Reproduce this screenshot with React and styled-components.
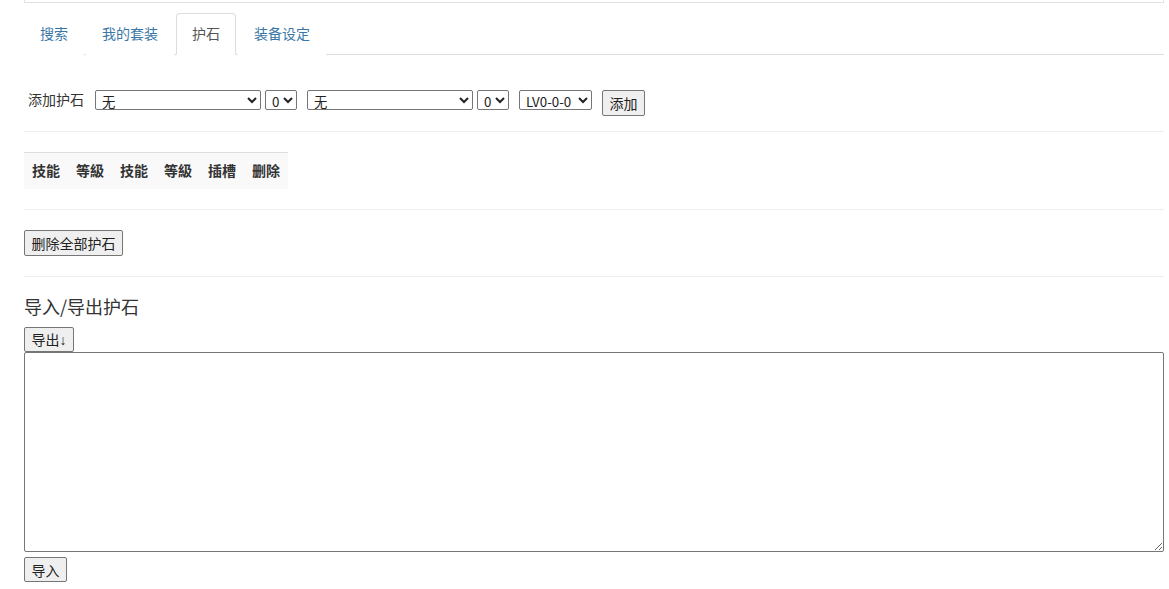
import React from 'react'
import styled, { createGlobalStyle } from 'styled-components'

const GlobalStyle = createGlobalStyle`
  body {
    margin: 0;
    background: #fff;
    font-family: "Noto Sans CJK SC", "Noto Sans", "Liberation Sans", sans-serif;
    font-size: 14px;
    color: #333;
  }
`

const Page = styled.div`
  width: 1140px;
  margin-left: 24px;
`

const TopStrip = styled.div`
  height: 2px;
  border: 1px solid #e2e2e2;
  border-top: none;
`

const Tabs = styled.ul`
  display: flex;
  list-style: none;
  margin: 10px 0 0;
  padding: 0;
  border-bottom: 1px solid #ddd;
`

const Tab = styled.li`
  margin-right: 2px;
  margin-bottom: -1px;
  a {
    display: block;
    padding: 9px 15px 11px;
    line-height: 20px;
    font-size: 14px;
    text-decoration: none;
    border: 1px solid transparent;
    border-radius: 4px 4px 0 0;
    color: ${p => (p.$active ? '#555' : '#3a77a8')};
    background: #fff;
    ${p => p.$active && 'border-color: #ddd; border-bottom-color: transparent;'}
  }
`

const AddRow = styled.div`
  display: flex;
  align-items: flex-start;
  padding-top: 35px;
`

const Label = styled.span`
  padding-left: 4px;
  margin-right: 11px;
  line-height: 19px;
  font-size: 14px;
`

const Select = styled.select`
  box-sizing: border-box;
  height: 20px;
  width: ${p => p.$w}px;
  margin-right: ${p => p.$gap}px;
  padding: 0 0 0 2px;
  font-family: "Noto Sans CJK SC", "Liberation Sans", sans-serif;
  font-size: 13.33px;
  color: #222;
  border: 1px solid #767676;
  border-radius: 2px;
  background: #fff;
`

const Button = styled.button`
  box-sizing: border-box;
  height: ${p => p.$h || 25}px;
  padding: 0 6.5px;
  font-family: "Noto Sans CJK SC", "Liberation Sans", sans-serif;
  font-size: 14px;
  line-height: 20px;
  color: #222;
  background: #efefef;
  border: 1px solid #767676;
  border-radius: 2px;
`

const Arrow = styled.span`
  font-family: "Liberation Sans", sans-serif;
`

const Rule = styled.hr`
  margin: ${p => p.$top}px 0 20px;
  border: 0;
  border-top: 1px solid #eee;
`

const Table = styled.table`
  border-collapse: collapse;
  border-top: 1px solid #ddd;
  background: #f9f9f9;
  th {
    padding: 7px 8px 9px;
    line-height: 20px;
    font-size: 14px;
    font-weight: bold;
    text-align: left;
    color: #333;
  }
`

const Heading = styled.h4`
  margin: 20px 0 10px;
  font-size: 18px;
  font-weight: 400;
  line-height: 18px;
  padding-bottom: 2px;
  color: #333;
`

const Area = styled.textarea`
  display: block;
  box-sizing: border-box;
  width: 1140px;
  height: 200px;
  margin: 0 0 5px;
  border: 1px solid #767676;
  border-radius: 2px;
`

const tabs = ['搜索', '我的套装', '护石', '装备设定']
const heads = ['技能', '等級', '技能', '等級', '插槽', '删除']

export default function App() {
  return (
    <>
      <GlobalStyle />
      <Page>
        <TopStrip />
        <Tabs>
          {tabs.map(t => (
            <Tab key={t} $active={t === '护石'}>
              <a href="#">{t}</a>
            </Tab>
          ))}
        </Tabs>

        <AddRow>
          <Label>添加护石</Label>
          <Select $w={166} $gap={4}><option>无</option></Select>
          <Select $w={32} $gap={10}><option>0</option></Select>
          <Select $w={166} $gap={4}><option>无</option></Select>
          <Select $w={32} $gap={10}><option>0</option></Select>
          <Select $w={73} $gap={10}><option>LV0-0-0</option></Select>
          <Button $h={26}>添加</Button>
        </AddRow>
        <Rule $top={15} />

        <Table>
          <thead>
            <tr>
              {heads.map((h, i) => <th key={i}>{h}</th>)}
            </tr>
          </thead>
        </Table>
        <Rule $top={20} />

        <Button $h={26}>删除全部护石</Button>
        <Rule $top={20} />

        <Heading>导入/导出护石</Heading>
        <Button>导出<Arrow>↓</Arrow></Button>
        <Area />
        <Button>导入</Button>
      </Page>
    </>
  )
}
